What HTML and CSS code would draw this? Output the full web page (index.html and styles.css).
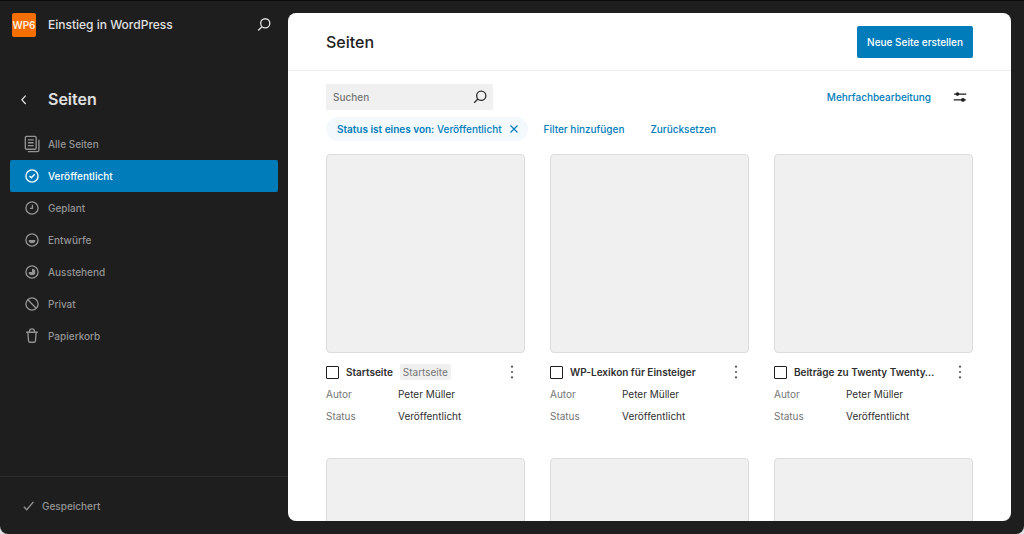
FILE: index.html
```html
<!DOCTYPE html>
<html lang="de">
<head>
<meta charset="utf-8">
<meta name="viewport" content="width=device-width, initial-scale=1">
<title>Seiten – Einstieg in WordPress</title>
<link rel="stylesheet" href="styles.css">
</head>
<body>
<div class="app">
  <aside class="sidebar">
    <div class="site">
      <span class="site-logo">WP6</span>
      <span class="site-name">Einstieg in WordPress</span>
      <button class="icon-button" type="button" aria-label="Befehlspalette öffnen">
        <svg class="icon icon-stroke" viewBox="0 0 24 24"><circle cx="13.5" cy="10" r="5.5"/><path d="M9.500 14 5 18.500"/></svg>
      </button>
    </div>
    <div class="nav-head">
      <button class="icon-button" type="button" aria-label="Zurück">
        <svg class="icon icon-stroke" viewBox="0 0 24 24"><path d="M14 8 9.500 13l4.500 5"/></svg>
      </button>
      <h1 class="nav-title">Seiten</h1>
    </div>
    <nav class="nav">
      <a class="nav-item" href="#">
        <svg class="icon icon-stroke" viewBox="0 0 24 24"><rect x="4" y="2.800" width="13" height="15.500" rx="1.500"/><path d="M7 7h7M7 10.500h7M7 14h7M20.300 7v12.200a2 2 0 0 1-2 2H7"/></svg>
        Alle Seiten
      </a>
      <a class="nav-item nav-item-active" href="#" aria-current="page">
        <svg class="icon icon-stroke" viewBox="0 0 24 24"><circle cx="12" cy="12" r="7.300"/><path d="m9 12 2.200 2.200 4-4.200"/></svg>
        Veröffentlicht
      </a>
      <a class="nav-item" href="#">
        <svg class="icon icon-stroke" viewBox="0 0 24 24"><circle cx="12" cy="12" r="7.300"/><path d="M12.500 8v4.500H9.500"/></svg>
        Geplant
      </a>
      <a class="nav-item" href="#">
        <svg class="icon icon-stroke" viewBox="0 0 24 24"><circle cx="12" cy="12" r="7.300"/><path class="solid" d="M8 12h8a4 4 0 0 1-8 0z"/></svg>
        Entwürfe
      </a>
      <a class="nav-item" href="#">
        <svg class="icon icon-stroke" viewBox="0 0 24 24"><circle cx="12" cy="12" r="7.300"/><path class="solid" d="M12 8a4 4 0 1 1-4 4h4z"/></svg>
        Ausstehend
      </a>
      <a class="nav-item" href="#">
        <svg class="icon icon-stroke" viewBox="0 0 24 24"><circle cx="12" cy="12" r="7.300"/><path d="m7 7 10 10"/></svg>
        Privat
      </a>
      <a class="nav-item" href="#">
        <svg class="icon icon-stroke" viewBox="0 0 24 24"><path d="M5 7.500h14M9 7.500V6.500a3 3 0 0 1 6 0v1M7 7.500l.9 10.700a1.500 1.500 0 0 0 1.500 1.300h5.200a1.500 1.500 0 0 0 1.500-1.300L17 7.500"/></svg>
        Papierkorb
      </a>
    </nav>
    <div class="saved">
      <svg class="icon icon-stroke" viewBox="0 0 24 24"><path d="m7 13 3.500 3.500L18.500 7"/></svg>
      Gespeichert
    </div>
  </aside>

  <main class="panel">
    <header class="panel-head">
      <h2 class="panel-title">Seiten</h2>
      <button class="primary" type="button">Neue Seite erstellen</button>
    </header>
    <div class="panel-body">
      <div class="toolbar">
        <div class="search">
          <input class="search-input" type="search" placeholder="Suchen" aria-label="Suchen">
          <svg class="icon icon-stroke" viewBox="0 0 24 24"><circle cx="13.500" cy="10.500" r="5.500"/><path d="M9.500 14.500 5 19"/></svg>
        </div>
        <div class="toolbar-actions">
          <button class="link" type="button">Mehrfachbearbeitung</button>
          <button class="icon-button" type="button" aria-label="Ansichtsoptionen">
            <svg class="icon icon-stroke" viewBox="0 0 24 24"><path d="M5 8.500h14.500M4.500 15.500H19"/><circle class="solid" cx="9" cy="8.500" r="2.200"/><circle class="solid" cx="15.500" cy="15.500" r="2.200"/></svg>
          </button>
        </div>
      </div>
      <div class="filters">
        <div class="chip">
          <span><b class="chip-label">Status ist eines von:</b> Veröffentlicht</span>
          <button class="chip-close" type="button" aria-label="Filter entfernen">
            <svg class="icon-small icon-stroke" viewBox="0 0 12 12"><path d="m2.500 2.500 7 7m0-7-7 7"/></svg>
          </button>
        </div>
        <button class="link" type="button">Filter hinzufügen</button>
        <button class="link" type="button">Zurücksetzen</button>
      </div>
      <div class="cards">
        <article class="card">
          <div class="preview"></div>
          <div class="card-head">
            <input class="check" type="checkbox" id="page-1">
            <label class="card-title" for="page-1">Startseite</label>
            <span class="badge">Startseite</span>
            <button class="more" type="button" aria-label="Aktionen"><svg class="icon" viewBox="0 0 24 24"><path d="M11 4.500h2v2h-2zM11 11h2v2h-2zM11 17.500h2v2h-2z"/></svg></button>
          </div>
          <dl class="fields"><dt>Autor</dt><dd>Peter Müller</dd><dt>Status</dt><dd>Veröffentlicht</dd></dl>
        </article>
        <article class="card">
          <div class="preview"></div>
          <div class="card-head">
            <input class="check" type="checkbox" id="page-2">
            <label class="card-title" for="page-2">WP-Lexikon für Einsteiger</label>
            <button class="more" type="button" aria-label="Aktionen"><svg class="icon" viewBox="0 0 24 24"><path d="M11 4.500h2v2h-2zM11 11h2v2h-2zM11 17.500h2v2h-2z"/></svg></button>
          </div>
          <dl class="fields"><dt>Autor</dt><dd>Peter Müller</dd><dt>Status</dt><dd>Veröffentlicht</dd></dl>
        </article>
        <article class="card">
          <div class="preview"></div>
          <div class="card-head">
            <input class="check" type="checkbox" id="page-3">
            <label class="card-title" for="page-3">Beiträge zu Twenty Twenty…</label>
            <button class="more" type="button" aria-label="Aktionen"><svg class="icon" viewBox="0 0 24 24"><path d="M11 4.500h2v2h-2zM11 11h2v2h-2zM11 17.500h2v2h-2z"/></svg></button>
          </div>
          <dl class="fields"><dt>Autor</dt><dd>Peter Müller</dd><dt>Status</dt><dd>Veröffentlicht</dd></dl>
        </article>
        <article class="card"><div class="preview"></div></article>
        <article class="card"><div class="preview"></div></article>
        <article class="card"><div class="preview"></div></article>
      </div>
    </div>
  </main>
</div>
</body>
</html>
```
FILE: styles.css
```css
* { box-sizing: border-box; }

body {
  margin: 0;
  background: #dfe3e8;
  color: #2f2f2f;
  font-family: Inter, "Liberation Sans", sans-serif;
  font-size: 10px;
  line-height: 16px;
}

h1, h2, dl, dd { margin: 0; }

button {
  border: 0;
  padding: 0;
  background: none;
  color: inherit;
  font: inherit;
  cursor: pointer;
}

.app {
  display: flex;
  height: 100vh;
  padding: 12px 13px 13px 0;
  border-top: 1px solid #0c0c0c;
  border-radius: 0 0 8px 8px;
  background: #1e1e1e;
}

.icon { display: block; flex: none; width: 20px; height: 20px; fill: currentColor; }
.icon-small { display: block; width: 12px; height: 12px; }
.icon-stroke { fill: none; stroke: currentColor; stroke-width: 1.6; }
.icon-small.icon-stroke { stroke-width: 1.2; }
.icon .solid { fill: currentColor; stroke: none; }
.icon-button { flex: none; }

/* Sidebar */
.sidebar {
  display: flex;
  flex: none;
  flex-direction: column;
  width: 288px;
  margin-bottom: -13px;
  color: #949494;
}

.site {
  display: flex;
  align-items: center;
  gap: 12px;
  height: 24px;
  padding: 0 14px 0 12px;
  color: #e0e0e0;
}

.site-logo {
  width: 24px;
  border-radius: 2px;
  background: #f56e00;
  color: #fff0e0;
  font-size: 10px;
  font-weight: 600;
  line-height: 24px;
  text-align: center;
}

.site-name { flex: 1; font-size: 12px; font-weight: 500; }

.nav-head {
  display: flex;
  align-items: center;
  gap: 14px;
  margin-top: 50px;
  padding-left: 14px;
  color: #e0e0e0;
}

.nav-title { font-size: 16px; font-weight: 600; line-height: 24px; }

.nav { margin-top: 17px; padding: 0 10px; }

.nav-item {
  display: flex;
  align-items: center;
  gap: 6px;
  height: 32px;
  padding: 0 12px;
  border-radius: 2px;
  color: inherit;
  font-weight: 500;
  text-decoration: none;
}

.nav-item-active { background: #007cba; color: #fff; }

.saved {
  display: flex;
  align-items: center;
  gap: 4px;
  height: 58px;
  margin-top: auto;
  padding-left: 18px;
  border-top: 1px solid #2b2b2b;
  font-weight: 500;
}

/* Content panel */
.panel {
  display: flex;
  flex: 1;
  flex-direction: column;
  min-width: 0;
  overflow: hidden;
  border-radius: 8px;
  background: #fff;
}

.panel-head {
  display: flex;
  flex: none;
  align-items: center;
  justify-content: space-between;
  height: 58px;
  padding: 0 38px;
  border-bottom: 1px solid #ececec;
}

.panel-title { color: #1e1e1e; font-size: 16px; font-weight: 500; line-height: 24px; }

.primary {
  height: 32px;
  padding: 0 10px;
  border-radius: 2px;
  background: #007cba;
  color: #fff;
  font-weight: 500;
}

.panel-body { flex: 1; overflow: hidden; padding: 13px 38px 0; }

.toolbar, .toolbar-actions { display: flex; align-items: center; }
.toolbar { justify-content: space-between; }
.toolbar-actions { gap: 19px; padding-right: 3px; color: #1e1e1e; }
.link { color: #007cba; font-weight: 500; }

.search {
  display: flex;
  align-items: center;
  width: 167px;
  height: 26px;
  padding: 0 3px 0 7px;
  background: #f0f0f0;
}

.search-input {
  flex: 1;
  min-width: 0;
  border: 0;
  padding: 0;
  background: none;
  color: inherit;
  font: inherit;
  font-weight: 500;
}

.search-input::placeholder { color: #757575; opacity: 1; }

.filters { display: flex; align-items: center; gap: 26px; margin-top: 7px; }

.chip {
  display: flex;
  align-items: center;
  gap: 6px;
  height: 24px;
  margin-right: -10px;
  padding: 0 8px 0 11px;
  border-radius: 12px;
  background: #f3f9fd;
  color: #007cba;
  font-weight: 500;
}

.chip-label { font-weight: 600; }

.cards {
  display: grid;
  grid-template-columns: repeat(3, minmax(0, 1fr));
  gap: 32px 25px;
  margin-top: 13px;
}

.preview {
  aspect-ratio: 1;
  border: 1px solid #dcdcdc;
  border-radius: 4px;
  background: #f0f0f0;
}

.card-head {
  display: flex;
  align-items: center;
  gap: 7px;
  height: 20px;
  margin-top: 9px;
}

.check {
  flex: none;
  appearance: none;
  width: 13px;
  height: 13px;
  margin: 0;
  border: 1px solid #1e1e1e;
  border-radius: 1px;
}

.card-title {
  overflow: hidden;
  font-weight: 600;
  text-overflow: ellipsis;
  white-space: nowrap;
}

.badge {
  padding: 0 3px;
  border-radius: 2px;
  background: #f0f0f0;
  color: #757575;
}

.more { flex: none; margin-left: auto; padding-right: 3px; }

.fields {
  display: grid;
  grid-template-columns: 72px 1fr;
  row-gap: 6px;
  margin-top: 4px;
  padding-bottom: 2px;
}

.fields dt { color: #757575; }
```
